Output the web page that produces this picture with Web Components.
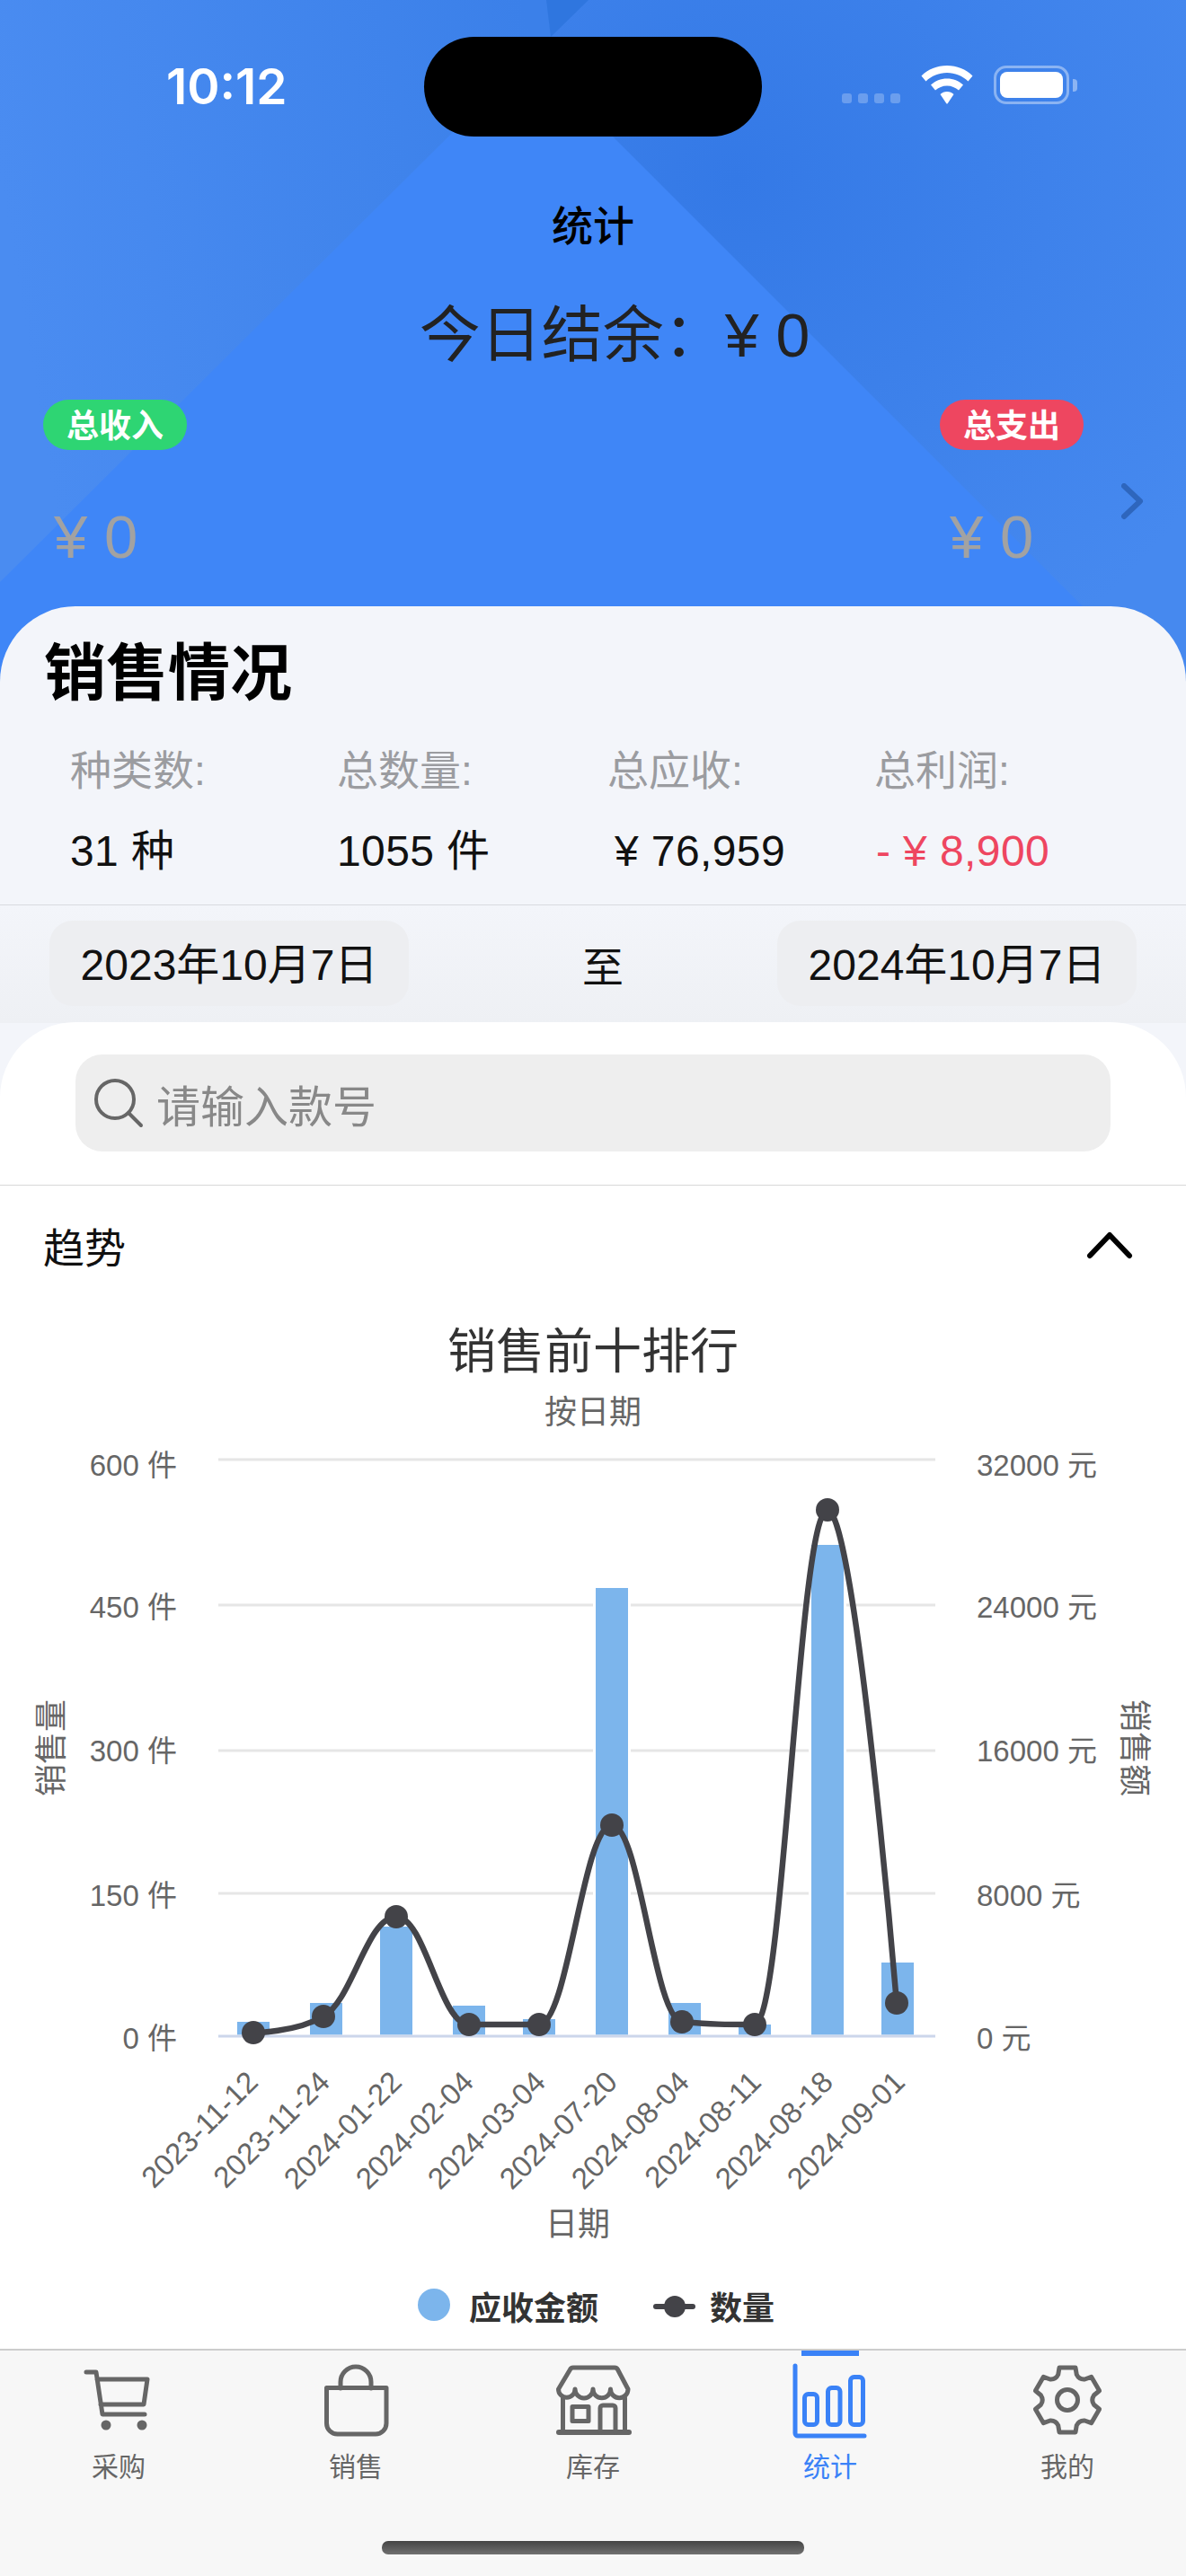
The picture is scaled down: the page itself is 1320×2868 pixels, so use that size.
<!DOCTYPE html>
<html lang="zh-CN">
<head>
<meta charset="utf-8">
<title>统计</title>
<style>
	html, body { margin: 0; padding: 0; }
	body { font-family: "Liberation Sans", "Noto Sans CJK SC", sans-serif; }
</style>
</head>
<body>
<app-shell>
	<stats-header></stats-header>
	<sales-sheet></sales-sheet>
	<tab-bar>
		<tab-item icon="cart">采购</tab-item>
		<tab-item icon="bag">销售</tab-item>
		<tab-item icon="store">库存</tab-item>
		<tab-item icon="chart" active>统计</tab-item>
		<tab-item icon="gear">我的</tab-item>
	</tab-bar>
</app-shell>

<script>
const FONT = `"Liberation Sans", "Noto Sans CJK SC", sans-serif`;

class AppShell extends HTMLElement {
	constructor() {
		super();
		this.attachShadow({ mode: "open" });
		this.shadowRoot.innerHTML = `
			<style>
				:host {
					display: flex;
					flex-direction: column;
					width: 1320px;
					height: 2868px;
					overflow: hidden;
					background: #fff;
					font-family: ${FONT};
				}
			</style>
			<slot></slot>
		`;
	}
}

class StatusBar extends HTMLElement {
	constructor() {
		super();
		this.attachShadow({ mode: "open" });
		this.shadowRoot.innerHTML = `
			<style>
				:host {
					display: grid;
					grid-template-columns: 472px 376px 1fr;
					height: 111px;
					margin-top: 41px;
				}
				.time {
					padding-left: 185px;
					font: 600 55px/110px Inter, ${FONT};
					color: #fff;
				}
				.island { background: #000; border-radius: 56px; }
				.icons {
					display: flex;
					align-items: flex-end;
					height: 43px;
					margin-top: 32px;
					padding-left: 89px;
				}
				.dots { display: flex; gap: 7px; margin-bottom: 1px; }
				.dots i { width: 11px; height: 11px; border-radius: 3px; background: rgba(255, 255, 255, .25); }
				.wifi { margin-left: 23px; display: block; }
				.battery {
					box-sizing: border-box;
					width: 84px;
					height: 43px;
					margin-left: 23px;
					padding: 4px;
					border: 3px solid rgba(255, 255, 255, .4);
					border-radius: 14px;
				}
				.battery b { display: block; height: 100%; background: #fff; border-radius: 8px; }
				.nub {
					width: 5px;
					height: 14px;
					margin: 0 0 14px 4px;
					background: rgba(255, 255, 255, .4);
					border-radius: 0 4px 4px 0;
				}
			</style>
			<div class="time">10:12</div>
			<div class="island"></div>
			<div class="icons">
				<div class="dots"><i></i><i></i><i></i><i></i></div>
				<svg class="wifi" width="58" height="43" viewBox="0 0 58 43" fill="#fff">
					<path d="M29 0C40 0 50 4 57.500 11.500L52.500 17.500C46 11.500 38 8 29 8S12 11.500 5.500 17.500L.5 11.500C8 4 18 0 29 0Z"/>
					<path d="M29 14.500C36 14.500 42 17 47 21.500L42 27.500C38.500 24.500 34 22.500 29 22.500S19.500 24.500 16 27.500L11 21.500C16 17 22 14.500 29 14.500Z"/>
					<path d="M29 29C32 29 34.500 30 36.500 32L29.500 42.500H28.500L21.500 32C23.500 30 26 29 29 29Z"/>
				</svg>
				<div class="battery"><b></b></div>
				<div class="nub"></div>
			</div>
		`;
	}
}

class StatsHeader extends HTMLElement {
	constructor() {
		super();
		this.attachShadow({ mode: "open" });
		this.shadowRoot.innerHTML = `
			<style>
				:host {
					display: block;
					position: relative;
					height: 760px;
					overflow: hidden;
					background: #3f86f7;
				}
				.bg { position: absolute; left: 0; top: 0; }
				.content { position: relative; display: flex; flex-direction: column; }
				.title {
					margin-top: 70px;
					font-size: 46px;
					line-height: 60px;
					font-weight: 500;
					text-align: center;
					color: #000;
				}
				.balance {
					margin-top: 46px;
					padding-left: 48px;
					font-size: 68px;
					line-height: 90px;
					text-align: center;
					color: #222;
				}
				.badges {
					display: flex;
					justify-content: space-between;
					margin-top: 27px;
					padding: 0 114px 0 48px;
				}
				.badge {
					width: 160px;
					height: 56px;
					border-radius: 28px;
					font-size: 36px;
					font-weight: 700;
					line-height: 59px;
					text-align: center;
					color: #fff;
				}
				.in { background: #2ed573; }
				.out { background: #ee4660; }
				.amounts {
					display: grid;
					grid-template-columns: 997px 191px auto;
					margin-top: 37px;
					padding-left: 60px;
				}
				.amount {
					margin-top: 20px;
					font-size: 67px;
					line-height: 80px;
					color: #a2a2a2;
				}
				.chevron { display: block; }
			</style>
			<svg class="bg" width="1320" height="760" viewBox="0 0 1320 760">
				<defs>
					<linearGradient id="l" gradientUnits="userSpaceOnUse" x1="0" y1="200" x2="600" y2="100">
						<stop offset="0" stop-color="#4a8cf1"/>
						<stop offset="1" stop-color="#3b80e9"/>
					</linearGradient>
					<radialGradient id="r" gradientUnits="userSpaceOnUse" cx="820" cy="200" r="620">
						<stop offset="0" stop-color="#3479e6"/>
						<stop offset="1" stop-color="#4689ef"/>
					</radialGradient>
				</defs>
				<polygon fill="url(#l)" points="0,0 652,0 0,648"/>
				<polygon fill="url(#r)" points="652,0 1320,0 1320,760 1290,760 590,60"/>
				<polygon fill="#2f76df" points="608,0 655,0 613,41"/>
			</svg>
			<div class="content">
				<status-bar></status-bar>
				<div class="title">统计</div>
				<div class="balance">今日结余&#xFF1A;¥ 0</div>
				<div class="badges">
					<div class="badge in">总收入</div>
					<div class="badge out">总支出</div>
				</div>
				<div class="amounts">
					<div class="amount">¥ 0</div>
					<div class="amount">¥ 0</div>
					<svg class="chevron" width="26" height="42" viewBox="0 0 26 42" fill="none" stroke="#2e66bd" stroke-width="6" stroke-linecap="round" stroke-linejoin="round">
						<path d="M3 3L21 20L3 37"/>
					</svg>
				</div>
			</div>
		`;
	}
}

class StatCell extends HTMLElement {
	static get observedAttributes() { return ["label", "value"]; }

	constructor() {
		super();
		this.attachShadow({ mode: "open" });
		this.shadowRoot.innerHTML = `
			<style>
				:host { display: block; }
				.label { font-size: 46px; line-height: 60px; color: #9b9ca0; }
				.value {
					margin-top: 30px;
					padding-left: var(--value-indent, 0);
					font-size: 48px;
					line-height: 60px;
					letter-spacing: .4px;
					color: var(--value-color, #111);
					white-space: pre;
				}
			</style>
			<div class="label"></div>
			<div class="value"></div>
		`;
	}

	attributeChangedCallback(name, _old, value) {
		this.shadowRoot.querySelector("." + name).textContent = value;
	}
}

class SalesSheet extends HTMLElement {
	constructor() {
		super();
		this.attachShadow({ mode: "open" });
		this.shadowRoot.innerHTML = `
			<style>
				:host {
					display: flex;
					flex-direction: column;
					flex: 1;
					position: relative;
					margin-top: -85px;
					background: #f3f5fa;
					border-radius: 84px 84px 0 0;
				}
				h1 {
					margin: 32px 0 0;
					padding-left: 49px;
					font-size: 69px;
					line-height: 87px;
					font-weight: 700;
					color: #000;
				}
				.stats {
					display: grid;
					grid-template-columns: 297px 301px 297px 1fr;
					margin-top: 34px;
					padding: 0 0 29px 78px;
					border-bottom: 1px solid #d9dadf;
				}
				.offset { --value-indent: 8px; }
				.loss { --value-color: #ee4660; --value-indent: 2px; }
				.dates {
					display: flex;
					align-items: center;
					justify-content: space-between;
					padding: 17px 55px 19px;
					background: linear-gradient(#f3f5fa, #eef0f4);
				}
				.chip {
					width: 400px;
					height: 95px;
					border-radius: 26px;
					background: #edeef1;
					font-size: 48px;
					line-height: 100px;
					text-align: center;
					color: #111;
				}
				.to { padding-left: 22px; font-size: 46px; color: #111; }
				.panel {
					display: flex;
					flex-direction: column;
					flex: 1;
					background: #fff;
					border-radius: 84px 84px 0 0;
					margin-top: -1px;
				}
				.search-wrap { padding: 36px 84px 37px; border-bottom: 1px solid #d8d8d8; }
				.search {
					display: flex;
					align-items: center;
					gap: 14px;
					height: 108px;
					padding-left: 20px;
					border-radius: 30px;
					background: #eeeeee;
					font-size: 49px;
					color: #888;
				}
				.trend {
					display: flex;
					align-items: center;
					justify-content: space-between;
					height: 132px;
					padding: 0 59px 0 48px;
					font-size: 46px;
					color: #111;
				}
			</style>
			<h1>销售情况</h1>
			<div class="stats">
				<stat-cell label="种类数:" value="31 种"></stat-cell>
				<stat-cell label="总数量:" value="1055 件"></stat-cell>
				<stat-cell class="offset" label="总应收:" value="¥ 76,959"></stat-cell>
				<stat-cell class="loss" label="总利润:" value="- ¥ 8,900"></stat-cell>
			</div>
			<div class="dates">
				<div class="chip">2023年10月7日</div>
				<div class="to">至</div>
				<div class="chip">2024年10月7日</div>
			</div>
			<div class="panel">
				<div class="search-wrap">
					<div class="search">
						<svg width="56" height="56" viewBox="0 0 56 56" fill="none" stroke="#666" stroke-width="4" stroke-linecap="round">
							<circle cx="24" cy="24" r="21"/>
							<path d="M39 39L53 53"/>
						</svg>
						<span>请输入款号</span>
					</div>
				</div>
				<div class="trend">
					<span>趋势</span>
					<svg width="52" height="32" viewBox="0 0 52 32" fill="none" stroke="#000" stroke-width="6" stroke-linecap="round" stroke-linejoin="round">
						<path d="M4 28L26 5L48 28"/>
					</svg>
				</div>
				<sales-chart></sales-chart>
			</div>
		`;
	}
}

// highcharts style spline, control points per point
function splinePath(pts) {
	const smooth = 1.5, denom = 2.5;
	const conts = pts.map((p, i) => {
		const prev = pts[i - 1], next = pts[i + 1];
		if (!prev || !next) return null;
		let lx = (smooth * p.x + prev.x) / denom, ly = (smooth * p.y + prev.y) / denom;
		let rx = (smooth * p.x + next.x) / denom, ry = (smooth * p.y + next.y) / denom;
		const fix = (ry - ly) * (rx - p.x) / (rx - lx) + p.y - ry;
		ly += fix;
		ry += fix;
		if (ly > prev.y && ly > p.y) { ly = Math.max(prev.y, p.y); ry = 2 * p.y - ly; }
		else if (ly < prev.y && ly < p.y) { ly = Math.min(prev.y, p.y); ry = 2 * p.y - ly; }
		if (ry > next.y && ry > p.y) { ry = Math.max(next.y, p.y); ly = 2 * p.y - ry; }
		else if (ry < next.y && ry < p.y) { ry = Math.min(next.y, p.y); ly = 2 * p.y - ry; }
		return { lx, ly, rx, ry };
	});
	let d = `M${pts[0].x} ${pts[0].y}`;
	for (let i = 1; i < pts.length; i++) {
		const a = conts[i - 1] || { rx: pts[i - 1].x, ry: pts[i - 1].y };
		const b = conts[i] || { lx: pts[i].x, ly: pts[i].y };
		d += `C${a.rx} ${a.ry} ${b.lx} ${b.ly} ${pts[i].x} ${pts[i].y}`;
	}
	return d;
}

class SalesChart extends HTMLElement {
	constructor() {
		super();
		this.attachShadow({ mode: "open" });

		const dates = ["2023-11-12", "2023-11-24", "2024-01-22", "2024-02-04", "2024-03-04", "2024-07-20", "2024-08-04", "2024-08-11", "2024-08-18", "2024-09-01"];
		const barX = [264, 345, 423, 504, 582, 663, 744, 822, 903, 981];
		const barTop = [2252, 2231, 2146, 2234, 2249, 1769, 2231, 2255, 1721, 2186];
		const line = [[282, 2264], [360, 2246], [441, 2135], [522, 2255], [600, 2255], [681, 2033], [759, 2252], [840, 2255], [921, 1682], [998, 2231]]
			.map(([x, y]) => ({ x, y }));
		const gridY = [1626, 1788, 1950, 2109];
		const labels = [["600 件", "32000 元", 1632], ["450 件", "24000 元", 1790], ["300 件", "16000 元", 1950], ["150 件", "8000 元", 2111], ["0 件", "0 元", 2270]];

		const grid = gridY.map(y => `<path d="M243 ${y}H1041" stroke="#e6e6e6" stroke-width="3"/>`).join("");
		const bars = barX.map((x, i) => `<rect x="${x - 1.5}" y="${barTop[i] - 1.5}" width="39" height="${2268 - barTop[i] + 1.5}" fill="#7cb5ec" stroke="#fff" stroke-width="3"/>`).join("");
		const dots = line.map(p => `<circle cx="${p.x}" cy="${p.y}" r="13" fill="#434348"/>`).join("");
		const yLabels = labels.map(([l, r, y]) => `
			<text x="197" y="${y + 12}" text-anchor="end">${l}</text>
			<text x="1087" y="${y + 12}">${r}</text>`).join("");
		const xLabels = dates.map((d, i) => {
			const x = 289 + 80 * i;
			return `<text x="${x}" y="2321" text-anchor="end" transform="rotate(-45 ${x} 2321)">${d}</text>`;
		}).join("");

		this.shadowRoot.innerHTML = `
			<style>
				:host { display: block; height: 1162px; }
				svg { display: block; font-family: ${FONT}; }
				.axis text { font-size: 33px; fill: #666; }
				.title36 { font-size: 36px; fill: #666; }
				.legend { font-size: 36px; font-weight: 700; fill: #333; }
			</style>
			<svg width="1320" height="1162" viewBox="0 1453 1320 1162">
				<text x="660" y="1525" text-anchor="middle" font-size="54" fill="#333">销售前十排行</text>
				<text class="title36" x="660" y="1586" text-anchor="middle">按日期</text>
				${grid}
				${bars}
				<path d="M243 2268H1041" stroke="#ccd6eb" stroke-width="3"/>
				<path d="${splinePath(line)}" fill="none" stroke="#434348" stroke-width="6.500" stroke-linejoin="round"/>
				${dots}
				<g class="axis">${yLabels}${xLabels}</g>
				<text class="title36" x="0" y="0" text-anchor="middle" dominant-baseline="central" transform="translate(57 1947) rotate(-90)">销售量</text>
				<text class="title36" x="0" y="0" text-anchor="middle" dominant-baseline="central" transform="translate(1262 1947) rotate(90)">销售额</text>
				<text class="title36" x="643" y="2490" text-anchor="middle">日期</text>
				<circle cx="483" cy="2567" r="18" fill="#7cb5ec"/>
				<text class="legend" x="522" y="2584">应收金额</text>
				<path d="M730 2569H771" stroke="#434348" stroke-width="6" stroke-linecap="round"/>
				<circle cx="751" cy="2569" r="12" fill="#434348"/>
				<text class="legend" x="790" y="2584">数量</text>
			</svg>
		`;
	}
}

// gear outline: six teeth, flat on top and bottom
function gearPath() {
	const pt = (r, deg) => {
		const a = deg * Math.PI / 180;
		return `${(44 + r * Math.cos(a)).toFixed(1)} ${(44 + r * Math.sin(a)).toFixed(1)}`;
	};
	let d = "";
	for (let i = 0; i < 6; i++) {
		const a = -90 + i * 60;
		d += `${i ? "L" : "M"}${pt(37, a - 14)}L${pt(37, a + 14)}L${pt(30, a + 20)}Q${pt(26, a + 30)} ${pt(30, a + 40)}`;
	}
	return d + "Z";
}

const ICONS = {
	cart: `<path d="M8 13H19L26 60H73M20 21H76L72 49H24"/><circle cx="30" cy="72" r="5.500" fill="currentColor" stroke="none"/><circle cx="70" cy="72" r="5.500" fill="currentColor" stroke="none"/>`,
	bag: `<path d="M11.500 30.500H78V70a12 12 0 0 1-12 12H23.500a12 12 0 0 1-12-12Z"/><path d="M27 31V24a17 17 0 0 1 34 0V31"/>`,
	store: `<path d="M22 8H68a4 4 0 0 1 3.700 2.500L83 32A9.750 9.750 0 0 1 63.500 32A9.750 9.750 0 0 1 44 32A10 10 0 0 1 24 32A9.250 9.250 0 0 1 5.500 32L18.300 10.500A4 4 0 0 1 22 8Z"/><path d="M10.500 42V80M79.500 42V80"/><path d="M6 80H84" stroke-width="6"/><rect x="21" y="51.500" width="18" height="16"/><path d="M52 80V53a3 3 0 0 1 3-3H66a3 3 0 0 1 3 3V80"/>`,
	chart: `<path d="M5 6V81a3 3 0 0 0 3 3H82"/><rect x="15.500" y="37.500" width="14" height="34" rx="4"/><rect x="41.500" y="30.500" width="13.500" height="41" rx="4"/><rect x="66.500" y="18.500" width="14" height="53" rx="4"/>`,
	gear: `<path d="${gearPath()}"/><circle cx="44" cy="44" r="11.500"/>`,
};

class TabItem extends HTMLElement {
	constructor() {
		super();
		this.attachShadow({ mode: "open" });
		const active = this.hasAttribute("active");
		const icon = ICONS[this.getAttribute("icon")];
		this.shadowRoot.innerHTML = `
			<style>
				:host {
					display: flex;
					flex-direction: column;
					align-items: center;
					position: relative;
					padding-top: 11px;
					color: ${active ? "#3a82f7" : "#666"};
				}
				svg { display: block; }
				.label { margin-top: 11px; font-size: 30px; line-height: 40px; }
				.mark {
					position: absolute;
					top: 0;
					left: 100px;
					width: 64px;
					height: 6px;
					background: #3a82f7;
				}
			</style>
			${active ? `<div class="mark"></div>` : ""}
			<svg width="88" height="88" viewBox="0 0 88 88" fill="none" stroke="currentColor" stroke-width="5" stroke-linecap="round" stroke-linejoin="round">${icon}</svg>
			<div class="label"><slot></slot></div>
		`;
	}
}

class TabBar extends HTMLElement {
	constructor() {
		super();
		this.attachShadow({ mode: "open" });
		this.shadowRoot.innerHTML = `
			<style>
				:host {
					display: flex;
					flex-direction: column;
					height: 253px;
					box-sizing: border-box;
					border-top: 2px solid #cccccc;
					background: #f7f7f7;
				}
				.tabs { display: grid; grid-template-columns: repeat(5, 264px); }
				.home {
					width: 470px;
					height: 15px;
					margin: auto auto 24px;
					border-radius: 7px;
					background: linear-gradient(#454545, #707070);
				}
			</style>
			<div class="tabs"><slot></slot></div>
			<div class="home"></div>
		`;
	}
}

customElements.define("app-shell", AppShell);
customElements.define("status-bar", StatusBar);
customElements.define("stats-header", StatsHeader);
customElements.define("stat-cell", StatCell);
customElements.define("sales-sheet", SalesSheet);
customElements.define("sales-chart", SalesChart);
customElements.define("tab-item", TabItem);
customElements.define("tab-bar", TabBar);
</script>
</body>
</html>
